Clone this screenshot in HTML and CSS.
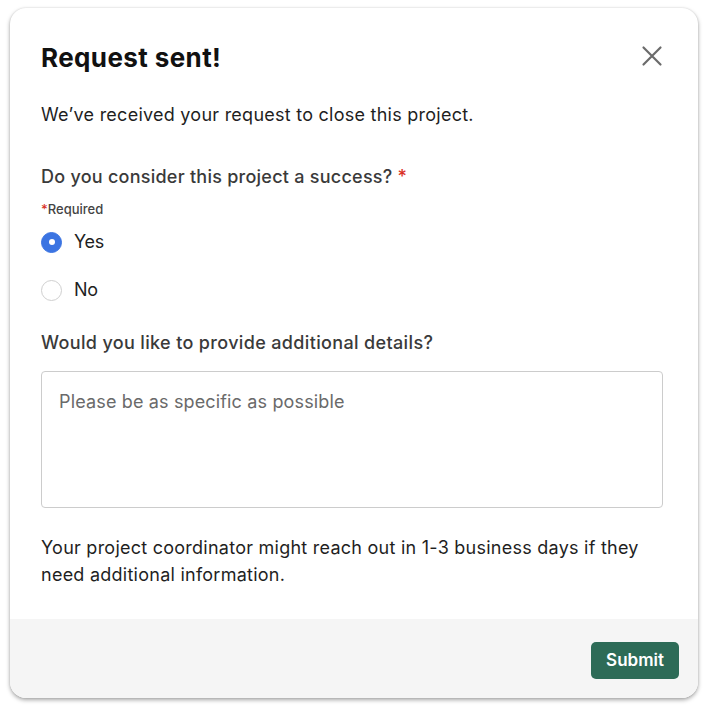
FILE: index.html
```html
<!DOCTYPE html>
<html>
<head>
<meta charset="utf-8">
<link rel="stylesheet" href="styles.css">
</head>
<body>
<div class="page">
  <div class="dialog">
    <div class="body">
      <div class="header">
        <h1 class="title">Request sent!</h1>
        <button class="close" aria-label="Close">
          <svg width="22" height="22" viewBox="0 0 22 22"><path d="M2.5 2.5L19.5 19.5M19.5 2.5L2.5 19.5" stroke="#6b6b6b" stroke-width="2.2" stroke-linecap="round"/></svg>
        </button>
      </div>
      <p class="intro">We’ve received your request to close this project.</p>
      <div class="question">Do you consider this project a success? <span class="star">*</span></div>
      <div class="required"><span class="star">*</span>Required</div>
      <div class="options">
        <label class="option"><span class="radio checked"></span><span>Yes</span></label>
        <label class="option"><span class="radio"></span><span>No</span></label>
      </div>
      <div class="question details">Would you like to provide additional details?</div>
      <div class="textarea">Please be as specific as possible</div>
      <p class="note">Your project coordinator might reach out in 1-3 business days if they need additional information.</p>
    </div>
    <div class="footer">
      <button class="submit">Submit</button>
    </div>
  </div>
</div>
</body>
</html>
```
FILE: styles.css
```css
* { box-sizing: border-box; }
html, body { margin: 0; padding: 0; background: #ffffff; }
body { font-family: Inter, "Noto Sans", sans-serif; color: #1f1f1f; }
.page { padding: 8px 12px 16px 10px; }
.dialog {
  width: 688px;
  height: 690px;
  background: #fff;
  border-radius: 16px;
  box-shadow: 0 2px 4px rgba(0,0,0,0.35), 0 0 2px rgba(0,0,0,0.12);
  overflow: hidden;
  display: flex;
  flex-direction: column;
}
.body { padding: 30px 35px 0 31px; flex: 1; }
.header { display: flex; justify-content: space-between; align-items: center; height: 38px; }
.title { margin: 0; font-size: 26px; font-weight: 700; color: #111; letter-spacing: 0.4px; }
.close { background: none; border: 0; padding: 0; width: 22px; height: 22px; margin-right: 0; margin-top: -3px; display: flex; }
.intro { margin: 27px 0 0; font-size: 18px; line-height: 24px; color: #1f1f1f; letter-spacing: 0.25px; }
.question { margin-top: 38px; font-size: 18px; line-height: 24px; font-weight: 500; color: #3a3a3a; letter-spacing: 0.25px; }
.star { color: #d93025; }
.required { margin-top: 12px; font-size: 13px; line-height: 16px; font-weight: 500; color: #444; }
.options { display: flex; flex-direction: column; gap: 26px; margin-top: 14px; }
.option { display: flex; align-items: center; gap: 12px; font-size: 18px; line-height: 22px; color: #1f1f1f; letter-spacing: -0.3px; }
.radio {
  width: 21px; height: 21px; border-radius: 50%;
  border: 1.5px solid #cfcfcf; background: #fff; flex: none;
}
.radio.checked { background: #3b74e2; border-color: #3b74e2; position: relative; }
.radio.checked::after {
  content: ""; position: absolute; left: 50%; top: 50%;
  width: 6px; height: 6px; margin: -3px 0 0 -3px; border-radius: 50%; background: #fff;
}
.details { margin-top: 30px; letter-spacing: 0.35px; }
.textarea {
  margin-top: 16px;
  height: 137px;
  border: 1px solid #cccccc;
  border-radius: 4px;
  padding: 18px 17px;
  font-size: 18px; line-height: 24px; color: #6a6a6a; letter-spacing: 0.15px;
}
.note { margin: 26px 0 0; font-size: 18px; line-height: 27px; color: #1f1f1f; letter-spacing: 0.25px; }
.footer {
  height: 79px; background: #f5f5f5;
  display: flex; justify-content: flex-end; align-items: center;
  padding: 0 19px 0 0;
}
.submit {
  background: #2d6b57; color: #fff; border: 0; border-radius: 5px;
  font-family: Inter, sans-serif; font-size: 17px; font-weight: 600;
  width: 88px; height: 37px; margin-top: 3px;
}
```
